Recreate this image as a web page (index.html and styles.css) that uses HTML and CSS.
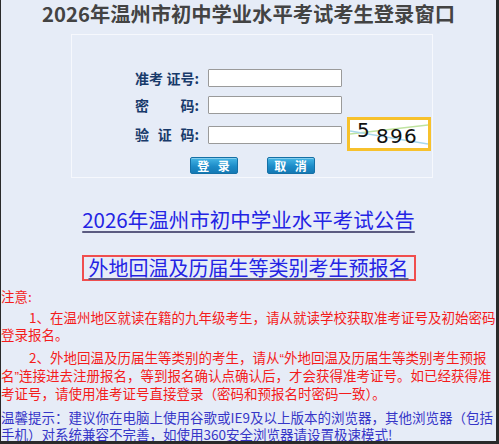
FILE: index.html
```html
<!DOCTYPE html>
<html lang="zh-CN">
<head>
<meta charset="utf-8">
<title>2026年温州市初中学业水平考试考生登录窗口</title>
<link rel="stylesheet" href="styles.css">
</head>
<body>
<div class="page">
  <h1 class="title">2026年温州市初中学业水平考试考生登录窗口</h1>
  <div class="panel">
    <form class="login">
      <div class="row">
        <label class="lbl"><span>准考</span><span>证号:</span></label>
        <input class="field" type="text">
      </div>
      <div class="row row-2">
        <label class="lbl"><span>密</span><span>码:</span></label>
        <input class="field" type="password">
      </div>
      <div class="row row-3">
        <label class="lbl"><span>验</span><span>证</span><span>码:</span></label>
        <input class="field" type="text">
        <div class="captcha">
          <svg width="78" height="28" viewBox="0 0 78 28">
            <rect width="78" height="28" fill="#ffffff"/>
            <line x1="0" y1="14" x2="78" y2="5" stroke="#bfe3a0" stroke-width="1.4"/>
            <line x1="0" y1="11" x2="78" y2="24" stroke="#a8d8ea" stroke-width="1.4"/>
            <text x="7" y="17" class="cap-d">5</text>
            <text x="26" y="23" class="cap-d">8</text>
            <text x="40" y="23" class="cap-d">9</text>
            <text x="54" y="23" class="cap-d">6</text>
          </svg>
        </div>
      </div>
      <div class="buttons">
        <button type="button" class="btn">登 录</button>
        <button type="button" class="btn">取 消</button>
      </div>
    </form>
  </div>
  <div class="link-row"><a class="link" href="#">2026年温州市初中学业水平考试公告</a></div>
  <div class="link-row link-row-2"><a class="link link-boxed" href="#">外地回温及历届生等类别考生预报名</a></div>
  <div class="notes">
    <p class="note-head">注意:</p>
    <p class="note">1、在温州地区就读在籍的九年级考生，请从就读学校获取准考证号及初始密码登录报名。</p>
    <p class="note">2、外地回温及历届生等类别的考生，请从<span class="q">“</span>外地回温及历届生等类别考生预报名<span class="q">”</span>连接进去注册报名，等到报名确认点确认后，才会获得准考证号。如已经获得准考证号，请使用准考证号直接登录（密码和预报名时密码一致）。</p>
    <p class="tip">温馨提示：建议你在电脑上使用谷歌或IE9及以上版本的浏览器，其他浏览器（包括手机）对系统兼容不完善，如使用360安全浏览器请设置极速模式!</p>
  </div>
</div>
</body>
</html>
```

FILE: styles.css
```css
html, body {
  margin: 0;
  padding: 0;
}

body {
  font-family: "Noto Sans CJK SC", "Liberation Sans", sans-serif;
}

.page {
  height: 444px;
  box-sizing: border-box;
  background: #e6ecf7;
  border-left: 1px solid #2a2a2a;
  border-right: 3px solid #2a2a2a;
  border-bottom: 3px solid #2a2a2a;
  overflow: hidden;
}

.title {
  margin: 0;
  text-align: center;
  font-size: 20.3px;
  font-weight: bold;
  line-height: 26px;
  color: #434343;
}

.panel {
  margin: 8px 0 0 70px;
  width: 360px;
  height: 142px;
  border: 1px solid #f6f8fd;
}

.login {
  margin: 0;
  padding: 34px 0 0 63px;
}

.row {
  display: flex;
  align-items: center;
  height: 18px;
}

.row-2 {
  margin-top: 9px;
}

.row-3 {
  margin-top: 3px;
  height: 34px;
}

.lbl {
  width: 64px;
  display: flex;
  justify-content: space-between;
  font-size: 14px;
  font-weight: bold;
  color: #183a6a;
  line-height: 18px;
}

.field {
  margin: 0 0 0 9px;
  width: 134px;
  height: 18px;
  box-sizing: border-box;
  border: 1px solid #9a9a9a;
  border-radius: 1px;
  background: #ffffff;
  padding: 0 2px;
}

.row-3 .field {
  margin-top: 2px;
}

.captcha {
  margin-left: 5px;
  width: 78px;
  height: 28px;
  border: 3px solid #f7c12c;
}

.captcha svg {
  display: block;
}

.cap-d {
  font-family: "DejaVu Sans", sans-serif;
  font-size: 20px;
  fill: #111111;
}

.buttons {
  display: flex;
  justify-content: center;
  gap: 29px;
  margin: 6px 0 0 -63px;
}

.btn {
  width: 48px;
  height: 17px;
  padding: 0;
  box-sizing: border-box;
  border: 1px solid #1570a6;
  border-radius: 2px;
  background: linear-gradient(#45b6e6, #1d8cc8 55%, #1479b4);
  box-shadow: inset 0 1px 0 rgba(255, 255, 255, 0.35);
  color: #ffffff;
  font-family: "Noto Sans CJK SC", sans-serif;
  font-size: 12px;
  font-weight: bold;
  line-height: 15px;
  letter-spacing: 3px;
  text-indent: 3px;
}

.link-row {
  margin-top: 29px;
  text-align: center;
  line-height: 24px;
}

.link {
  color: #2424e4;
  font-size: 20.5px;
  text-decoration: underline;
  text-decoration-color: #5b5b80;
  text-underline-offset: 3px;
}

.link-row-2 {
  margin-top: 22px;
  line-height: 22px;
}

.link-boxed {
  display: inline-block;
  font-size: 20px;
  line-height: 22px;
  padding: 0 5px;
  border: 2px solid #f04e4e;
  text-underline-offset: 2px;
}

.notes {
  margin-right: -3px;
  font-size: 13.5px;
  line-height: 17px;
}

.notes p {
  margin: 0;
}

.note-head {
  margin-top: 7px !important;
  color: #f41c1c;
}

.note {
  color: #f41c1c;
  text-indent: 28px;
  margin-top: 4px !important;
}

.note + .note {
  margin-top: 6px !important;
}

.q {
  font-family: "Liberation Sans", sans-serif;
}

.tip {
  color: #3636c8;
  margin-top: 7px !important;
}
```
